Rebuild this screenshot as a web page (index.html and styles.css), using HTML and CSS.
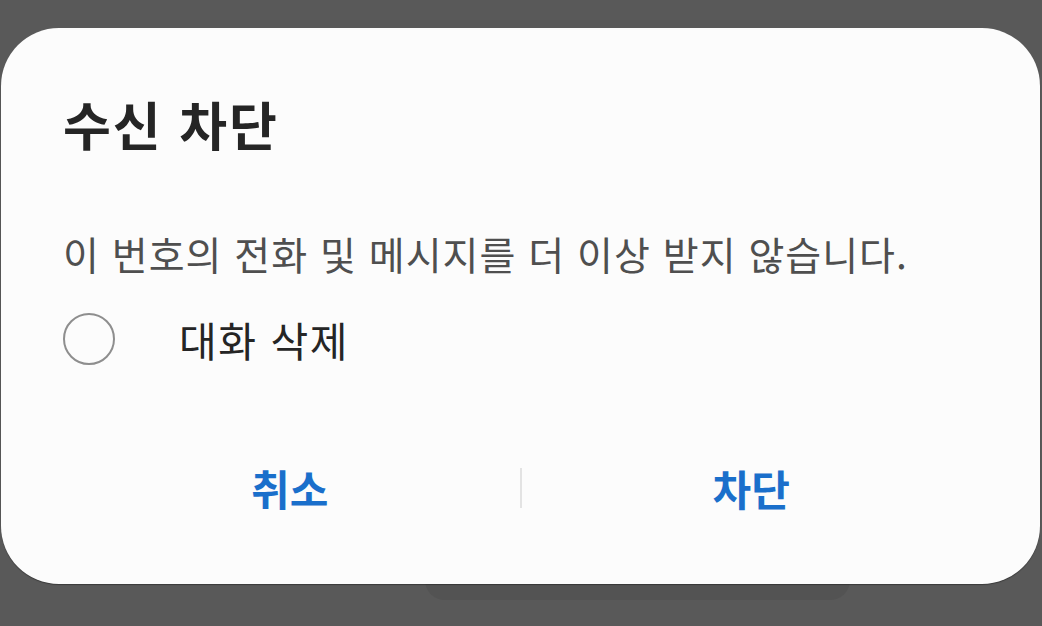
FILE: index.html
```html
<!DOCTYPE html>
<html lang="ko">
<head>
<meta charset="utf-8">
<title>수신 차단</title>
<link rel="stylesheet" href="styles.css">
</head>
<body>
<div class="screen">
  <div class="backdrop-sheet"></div>
  <div class="dialog">
    <h1 class="title">수신 차단</h1>
    <p class="message">이 번호의 전화 및 메시지를 더 이상 받지 않습니다.</p>
    <label class="option">
      <span class="radio"></span>
      <span class="option-label">대화 삭제</span>
    </label>
    <div class="actions">
      <button class="action">취소</button>
      <span class="divider"></span>
      <button class="action">차단</button>
    </div>
  </div>
</div>
</body>
</html>
```
FILE: styles.css
```css
html, body {
  margin: 0;
  padding: 0;
  background: #595959;
}
.screen {
  position: relative;
  width: 1042px;
  height: 626px;
  overflow: hidden;
  padding-top: 28px;
  box-sizing: border-box;
  font-family: "Noto Sans CJK KR", "Noto Sans", sans-serif;
}
.backdrop-sheet {
  position: absolute;
  left: 425px;
  top: 560px;
  width: 425px;
  height: 40px;
  border-radius: 22px;
  background: #535353;
}
.dialog {
  position: relative;
  margin-left: 1px;
  width: 1039px;
  height: 556px;
  box-sizing: border-box;
  background: #fcfcfc;
  border-radius: 58px;
  box-shadow: 0 1px 1px rgba(0, 0, 0, 0.35);
  padding: 70px 60px 0 62px;
  display: flex;
  flex-direction: column;
}
.title {
  margin: 0;
  font-size: 52px;
  line-height: 52px;
  font-weight: 700;
  letter-spacing: 2px;
  color: #252525;
}
.message {
  margin: 84px 0 0;
  font-size: 39px;
  line-height: 39px;
  font-weight: 400;
  letter-spacing: 1px;
  color: #4f4f4f;
}
.option {
  margin-top: 40px;
  height: 52px;
  display: flex;
  align-items: center;
}
.radio {
  width: 48px;
  height: 48px;
  border: 2px solid #8e8e8e;
  border-radius: 50%;
  flex: none;
}
.option-label {
  margin-left: 64px;
  font-size: 41px;
  line-height: 41px;
  letter-spacing: 1.5px;
  color: #252525;
}
.actions {
  margin: 93px -60px 0 -62px;
  padding: 0 59px;
  height: 60px;
  display: flex;
  align-items: center;
}
.action {
  flex: 1;
  border: 0;
  background: none;
  padding: 0;
  font-family: inherit;
  font-size: 42px;
  line-height: 42px;
  font-weight: 700;
  color: #1a6fcb;
}
.divider {
  width: 2px;
  height: 40px;
  background: #e3e3e3;
  flex: none;
}
```
